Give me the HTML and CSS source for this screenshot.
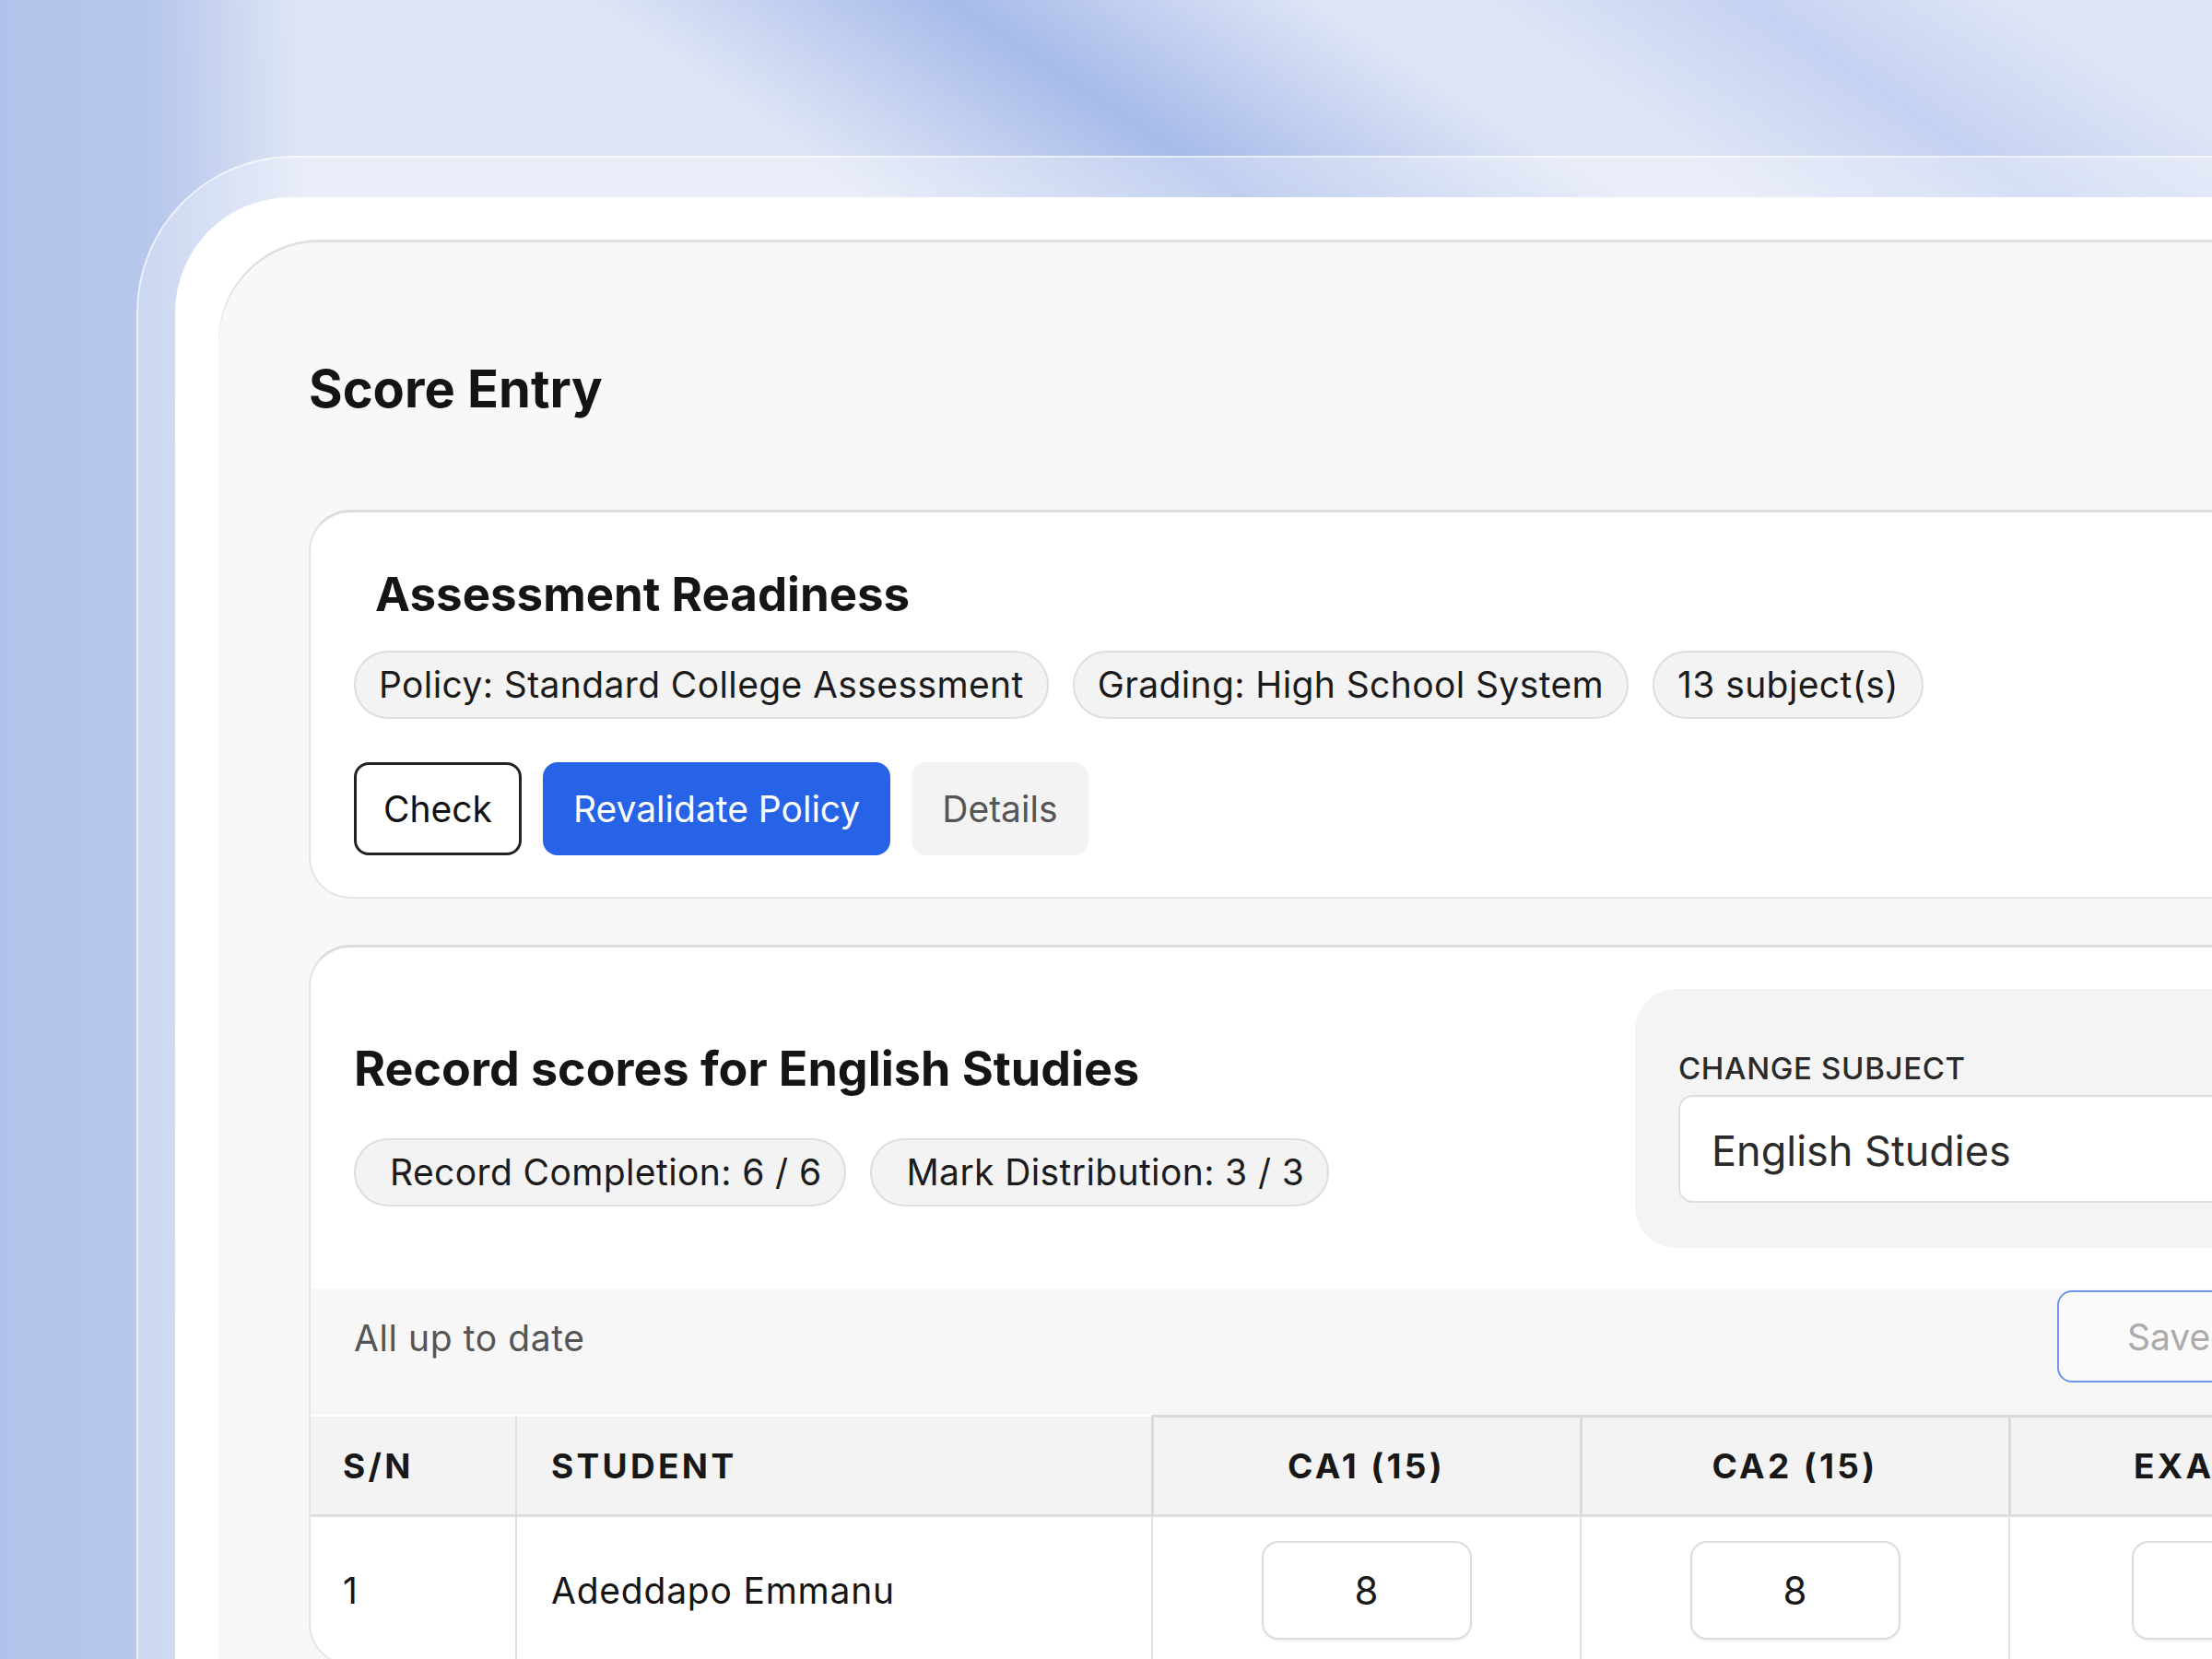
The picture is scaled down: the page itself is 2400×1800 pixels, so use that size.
FILE: index.html
```html
<!DOCTYPE html>
<html>
    <head>
        <meta charset="utf-8">
        <title>Score Entry</title>
        <link rel="stylesheet" href="styles.css">
    </head>
    <body>
        <div class="frame">
            <div class="panel">
                <main class="content">
                    <h1 class="page-title">Score Entry</h1>

                    <section class="card readiness">
                        <h2 class="card-title">Assessment Readiness</h2>
                        <div class="chips">
                            <span class="chip">Policy: Standard College Assessment</span>
                            <span class="chip">Grading: High School System</span>
                            <span class="chip">13 subject(s)</span>
                        </div>
                        <div class="actions">
                            <button class="btn btn-outline">Check</button>
                            <button class="btn btn-primary">Revalidate Policy</button>
                            <button class="btn btn-ghost">Details</button>
                        </div>
                    </section>

                    <section class="card scores">
                        <div class="scores-head">
                            <div class="scores-intro">
                                <h2 class="card-title">Record scores for English Studies</h2>
                                <div class="chips">
                                    <span class="chip chip-stat">Record Completion: 6 / 6</span>
                                    <span class="chip chip-stat">Mark Distribution: 3 / 3</span>
                                </div>
                            </div>
                            <div class="subject-box">
                                <label class="subject-label">Change subject</label>
                                <div class="subject-select">English Studies</div>
                            </div>
                        </div>

                        <div class="toolbar">
                            <span class="status">All up to date</span>
                            <button class="btn-save">Save</button>
                        </div>

                        <table class="score-table">
                            <colgroup>
                                <col class="col-sn">
                                <col class="col-student">
                                <col class="col-score">
                                <col class="col-score">
                                <col>
                            </colgroup>
                            <thead>
                                <tr>
                                    <th>S/N</th>
                                    <th class="th-student">Student</th>
                                    <th class="th-score">CA1 (15)</th>
                                    <th class="th-score">CA2 (15)</th>
                                    <th class="th-score">Exam (70)</th>
                                </tr>
                            </thead>
                            <tbody>
                                <tr>
                                    <td>1</td>
                                    <td class="td-student">Adeddapo Emmanu</td>
                                    <td class="td-score"><input class="score-input" type="text" value="8" readonly></td>
                                    <td class="td-score"><input class="score-input" type="text" value="8" readonly></td>
                                    <td class="td-score"><input class="score-input" type="text" value="52" readonly></td>
                                </tr>
                            </tbody>
                        </table>
                    </section>
                </main>
            </div>
        </div>
    </body>
</html>
```

FILE: styles.css
```css
html {
    box-sizing: border-box;
}
*, *:before, *:after {
    box-sizing: inherit;
}

body {
    margin: 0;
    height: 1800px;
    padding: 169px 0 0 148px;
    overflow: hidden;
    font-family: Inter, "Noto Sans", sans-serif;
    color: #151515;
    background-color: #dbe2f5;
    background-image:
        linear-gradient(90deg, #b1c3ea 0, #b8c8ec 170px, rgba(220, 228, 246, 0) 330px),
        linear-gradient(34deg, rgba(164, 185, 233, 0) 65%, rgba(164, 185, 233, 0.95) 73%, rgba(164, 185, 233, 0) 81%),
        linear-gradient(34deg, rgba(188, 203, 240, 0) 84%, rgba(188, 203, 240, 0.75) 90%, rgba(188, 203, 240, 0) 96%),
        linear-gradient(180deg, #e0e6f6 0, #d6def3 100%);
}

/* glass frame + white sheet */
.frame {
    width: 2600px;
    height: 1800px;
    padding: 43px 0 0 40px;
    border: 2px solid rgba(255, 255, 255, 0.6);
    border-right: 0;
    border-radius: 170px 0 0 0;
    background: rgba(255, 255, 255, 0.3);
}

.panel {
    height: 100%;
    padding: 46px 0 0 47px;
    border-radius: 125px 0 0 0;
    background: #fff;
}

.content {
    height: 100%;
    padding: 129px 0 0 98px;
    border-radius: 110px 0 0 0;
    background: #f8f8f8;
    box-shadow: inset 0 3px 0 #e0e0e0;
}

.page-title {
    margin: 0;
    font-size: 56px;
    font-weight: 700;
    line-height: 1.2;
    color: #141414;
}

/* cards */
.card {
    width: 2340px;
    margin-top: 97px;
    background: #fff;
    border: 2px solid #e5e5e5;
    border-top: 3px solid #dcdcdc;
    border-radius: 45px;
}

.card-title {
    margin: 0;
    font-size: 51px;
    font-weight: 700;
    line-height: 1.2;
}

.readiness {
    padding: 58px 47px 45px;
}
.readiness .card-title {
    padding-left: 23px;
}

.chips {
    display: flex;
    gap: 26px;
    margin-top: 31px;
}

.chip {
    display: inline-block;
    padding: 12px 25px;
    border: 2px solid #dedede;
    border-radius: 40px;
    background: #f3f3f3;
    font-size: 39px;
    line-height: 46px;
    letter-spacing: 0.01em;
    color: #1b1b1b;
    white-space: nowrap;
}

.actions {
    display: flex;
    gap: 23px;
    margin-top: 47px;
}

.btn {
    height: 101px;
    padding: 0 30px;
    border: 3px solid transparent;
    border-radius: 16px;
    font-family: inherit;
    font-size: 39px;
}
.btn-outline {
    padding: 0 29px;
    border-color: #222;
    background: #fff;
    color: #111;
}
.btn-primary {
    background: #2663e6;
    color: #fff;
}
.btn-ghost {
    background: #f3f3f3;
    color: #555;
}

/* score card */
.scores {
    margin-top: 50px;
    overflow: hidden;
}

.scores-head {
    display: grid;
    grid-template-columns: 1fr 852px;
    align-items: center;
    padding: 45px 47px 44px;
}

.scores .card-title {
    font-size: 52px;
}
.scores-intro {
    padding-top: 10px;
}
.scores .chips {
    margin-top: 44px;
}

.chip-stat {
    padding: 12px 25px 12px 37px;
}

.subject-box {
    padding: 66px 47px 49px;
    border-radius: 45px;
    background: #f4f4f4;
}

.subject-label {
    display: block;
    font-size: 33px;
    font-weight: 500;
    line-height: 40px;
    letter-spacing: 0.02em;
    text-transform: uppercase;
    color: #2a2a2a;
}

.subject-select {
    display: flex;
    align-items: center;
    height: 117px;
    margin-top: 9px;
    padding: 4px 0 0 34px;
    border: 2px solid #dedede;
    border-radius: 16px;
    background: #fff;
    font-size: 45px;
    color: #2b2b2b;
}

.toolbar {
    display: flex;
    justify-content: space-between;
    align-items: center;
    padding: 2px 47px 35px;
    background: #f7f7f7;
}

.status {
    padding-top: 3px;
    font-size: 39px;
    letter-spacing: 0.015em;
    color: #555;
}

.btn-save {
    width: 394px;
    height: 100px;
    padding: 0 0 0 74px;
    border: 2px solid #6d96ec;
    border-radius: 16px;
    background: #fafafa;
    font-family: inherit;
    font-size: 39px;
    text-align: left;
    color: #ababab;
}

/* table */
.score-table {
    width: 100%;
    table-layout: fixed;
    border-collapse: collapse;
}

.col-sn { width: 223px; }
.col-student { width: 690px; }
.col-score { width: 465px; }

.score-table th {
    height: 108px;
    padding: 0 0 0 35px;
    background: #f3f3f3;
    border-bottom: 3px solid #dedede;
    font-size: 37px;
    font-weight: 700;
    letter-spacing: 0.09em;
    text-transform: uppercase;
    text-align: left;
    color: #181818;
}

.score-table td {
    padding: 26px 0 26px 35px;
    font-size: 39px;
    letter-spacing: 0.02em;
    color: #151515;
    vertical-align: middle;
}

.score-table .th-student,
.score-table .td-student {
    padding-left: 37px;
    border-left: 2px solid #e0e0e0;
}

.score-table .th-score {
    padding: 0;
    text-align: center;
    border-left: 3px solid #dadada;
    border-top: 3px solid #dadada;
}

.score-table .td-score {
    padding-left: 0;
    text-align: center;
    border-left: 2px solid #e2e2e2;
}

.score-input {
    width: 228px;
    height: 107px;
    border: 2px solid #dcdcdc;
    border-radius: 18px;
    background: #fff;
    box-shadow: 0 2px 3px rgba(0, 0, 0, 0.05);
    font-family: inherit;
    font-size: 42px;
    text-align: center;
    color: #1a1a1a;
}
```
